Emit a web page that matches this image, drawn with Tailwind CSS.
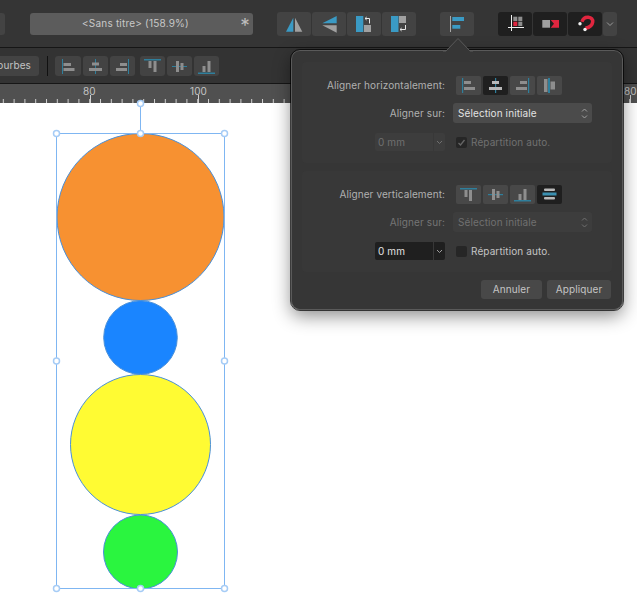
<!DOCTYPE html>
<html lang="fr">
<head>
    <meta charset="UTF-8">
    <title>Affinity - Aligner</title>
    <script src="https://cdn.jsdelivr.net/npm/@tailwindcss/browser@4"></script>
</head>
<body class="bg-white overflow-hidden font-['Inter',sans-serif] text-[10px] tracking-[0.1px]">
<div class="relative w-[637px] h-[605px] overflow-hidden flex flex-col">

    <!-- Main toolbar -->
    <div class="h-[47px] shrink-0 bg-[#353535] flex items-center">
        <div class="w-[5px] h-[22px] bg-[#434343] rounded-r-[3px]"></div>
        <div class="ml-[25px] w-[223px] h-[22px] bg-[#5c5c5c] rounded-[3px] relative flex items-center justify-center pr-[12px] text-[#c8c8c8] tracking-[0.2px]">
            &lt;Sans titre&gt; (158.9%)
            <span class="absolute right-[3px] top-[1px] text-[19px] leading-[24px] text-[#bdbdbd]">*</span>
        </div>
        <div class="ml-[24px] flex gap-px">
            <button class="w-[34px] h-[24px] bg-[#434343] rounded-[3px]">
                <svg width="34" height="24"><polygon points="9,19.7 16.3,19.7 16.3,5.7" fill="#3a9ac4"/><polygon points="18,5.7 18,19.7 25.3,19.7" fill="#a0a0a0"/></svg>
            </button>
            <button class="w-[34px] h-[24px] bg-[#434343] rounded-[3px]">
                <svg width="34" height="24"><polygon points="10.3,11.3 24.7,4 24.7,11.3" fill="#3a9ac4"/><polygon points="10.3,13.3 24.7,13.3 24.7,20.7" fill="#a0a0a0"/></svg>
            </button>
            <button class="w-[34px] h-[24px] bg-[#434343] rounded-[3px]">
                <svg width="34" height="24"><rect x="9" y="4" width="7.3" height="16" fill="#3a9ac4"/><rect x="17" y="13" width="7" height="7" fill="#a0a0a0"/><path d="M18 6.500h4.500v5M18 6.500l1.700-1.500M18 6.500l1.700 1.500" fill="none" stroke="#e6e6e6"/></svg>
            </button>
            <button class="w-[34px] h-[24px] bg-[#434343] rounded-[3px]">
                <svg width="34" height="24"><rect x="9" y="4" width="7.500" height="16" fill="#3a9ac4"/><rect x="17" y="4" width="7" height="7" fill="#a0a0a0"/><path d="M23.500 13v4.500H18M18 17.500l1.700-1.500M18 17.500l1.700 1.500" fill="none" stroke="#e6e6e6"/></svg>
            </button>
        </div>
        <button class="ml-[24px] w-[34px] h-[24px] bg-[#434343] rounded-[3px]">
            <svg width="34" height="24"><line x1="10.500" y1="4" x2="10.500" y2="20" stroke="#a8a8a8"/><rect x="12.300" y="5" width="11.700" height="4" fill="#3a9ac4"/><rect x="12.300" y="13" width="8" height="3.700" fill="#3a9ac4"/></svg>
        </button>
        <div class="ml-[24px] flex gap-px">
            <button class="w-[34px] h-[24px] bg-[#1f1f1f] rounded-[3px]">
                <svg width="34" height="24"><path d="M13.500 3v16M10 15.500h16" stroke="#f0f0f0" fill="none"/><rect x="15.300" y="4.700" width="4" height="4.300" fill="#8e8e8e"/><rect x="20.300" y="4.700" width="4" height="4.300" fill="#8e8e8e"/><rect x="15.300" y="9.700" width="4" height="4.300" fill="#e0263f"/><rect x="20.300" y="9.700" width="4" height="4.300" fill="#8e8e8e"/></svg>
            </button>
            <button class="w-[34px] h-[24px] bg-[#1f1f1f] rounded-[3px]">
                <svg width="34" height="24"><rect x="9.300" y="8" width="7.700" height="7.700" fill="#a0a0a0"/><polygon points="17.700,8 26,8 26,15.700 17.700,15.700 21,11.800" fill="#e0263f"/></svg>
            </button>
            <button class="w-[34px] h-[24px] bg-[#1f1f1f] rounded-[3px]">
                <svg width="34" height="24"><path d="M14 9.700C15 6.500 17.500 5 20.300 5.200C23.300 5.500 25 7.300 24.700 10C24.300 13 21 15.500 17.500 16.300" fill="none" stroke="#e0263f" stroke-width="3.500"/><circle cx="12" cy="11.700" r="1.700" fill="#f0f0f0"/><circle cx="17" cy="17.500" r="1.700" fill="#f0f0f0"/></svg>
            </button>
            <button class="w-[14px] h-[24px] bg-[#434343] rounded-[3px] flex items-center justify-center">
                <svg width="8" height="6"><path d="M1 1.500l3 3 3-3" fill="none" stroke="#9a9a9a"/></svg>
            </button>
        </div>
    </div>
    <div class="h-px shrink-0 bg-[#161616]"></div>

    <!-- Context toolbar -->
    <div class="h-[35px] shrink-0 bg-[#333333] flex items-center">
        <div class="w-[39px] h-[20px] bg-[#434343] rounded-r-[3px] flex items-center justify-end pr-[8px] text-[#c4c4c4]">ourbes</div>
        <div class="ml-[8px] w-px h-[20px] bg-[#111111]"></div>
        <div class="ml-[7px] flex gap-[2px]">
            <button class="w-[26px] h-[20px] bg-[#434343] rounded-[3px]"><svg width="26" height="20"><rect x="7" y="3" width="1" height="15" fill="#2f7f9c"/><rect x="8.500" y="7" width="7.500" height="3" fill="#8e8e8e"/><rect x="8.500" y="12" width="11" height="3" fill="#8e8e8e"/></svg></button>
            <button class="w-[25px] h-[20px] bg-[#434343] rounded-[3px]"><svg width="25" height="20"><rect x="12" y="3" width="1" height="15" fill="#2f7f9c"/><rect x="9" y="6.500" width="7" height="3" fill="#8e8e8e"/><rect x="6" y="12" width="13" height="3" fill="#8e8e8e"/></svg></button>
            <button class="w-[25px] h-[20px] bg-[#434343] rounded-[3px]"><svg width="25" height="20"><rect x="18" y="3" width="1" height="15" fill="#2f7f9c"/><rect x="10" y="7" width="7" height="3" fill="#8e8e8e"/><rect x="6" y="12" width="11" height="3" fill="#8e8e8e"/></svg></button>
        </div>
        <div class="ml-[5px] flex gap-[2px]">
            <button class="w-[25px] h-[20px] bg-[#434343] rounded-[3px]"><svg width="25" height="20"><rect x="4" y="3" width="17" height="1.500" fill="#2f7f9c"/><rect x="8.500" y="5" width="3" height="7" fill="#8e8e8e"/><rect x="13.500" y="5" width="3" height="11" fill="#8e8e8e"/></svg></button>
            <button class="w-[25px] h-[20px] bg-[#434343] rounded-[3px]"><svg width="25" height="20"><rect x="5" y="10" width="15" height="1" fill="#2f7f9c"/><rect x="9" y="5" width="3" height="11" fill="#8e8e8e"/><rect x="13.500" y="7" width="3" height="7" fill="#8e8e8e"/></svg></button>
            <button class="w-[25px] h-[20px] bg-[#434343] rounded-[3px]"><svg width="25" height="20"><rect x="4" y="16.500" width="17" height="1.500" fill="#2f7f9c"/><rect x="8.500" y="10" width="3" height="6" fill="#8e8e8e"/><rect x="13.500" y="5" width="3" height="11" fill="#8e8e8e"/></svg></button>
        </div>
    </div>
    <div class="h-px shrink-0 bg-[#161616]"></div>

    <!-- Ruler -->
    <div class="h-[19px] shrink-0 bg-[#505050] relative text-[#c4c4c4]">
        <span class="absolute left-[83px] top-[0px]">80</span>
        <span class="absolute left-[190px] top-[0px]">100</span>
        <span class="absolute left-[624px] top-[0px]">80</span>
        <svg width="637" height="19" class="absolute left-0 top-0">
            <defs>
                <pattern id="ticks" x="2.800" y="0" width="10.800" height="19" patternUnits="userSpaceOnUse">
                    <rect x="0" y="15" width="1" height="4" fill="#d0d0d0"/>
                </pattern>
            </defs>
            <rect width="637" height="19" fill="url(#ticks)"/>
            <path d="M90.500 11v8M198.500 11v8M306.500 11v8M630.500 11v8" stroke="#d0d0d0"/>
        </svg>
    </div>

    <!-- Canvas -->
    <div class="flex-1 relative bg-white">
        <svg width="637" height="502" viewBox="0 103 637 502" class="absolute left-0 top-0 overflow-visible">
            <circle cx="140.500" cy="217" r="83.500" fill="#f79131" stroke="#4a90d9"/>
            <circle cx="140.500" cy="337.500" r="36.800" fill="#1a85ff" stroke="#4a90d9"/>
            <circle cx="140.500" cy="444.500" r="70" fill="#fffb33" stroke="#4a90d9"/>
            <circle cx="140.500" cy="552" r="37" fill="#2af53f" stroke="#4a90d9"/>
            <rect x="56.500" y="133.500" width="168" height="455" fill="none" stroke="#7fb6f2"/>
            <line x1="140.500" y1="104" x2="140.500" y2="133" stroke="#7fb6f2"/>
            <g fill="#ffffff" stroke="#a6ccf6" stroke-width="1.500">
                <circle cx="140.500" cy="103.500" r="3"/>
                <circle cx="56.500" cy="133.500" r="3"/>
                <circle cx="140.500" cy="133.500" r="3"/>
                <circle cx="224.500" cy="133.500" r="3"/>
                <circle cx="56.500" cy="361" r="3"/>
                <circle cx="224.500" cy="361" r="3"/>
                <circle cx="56.500" cy="588.500" r="3"/>
                <circle cx="140.500" cy="588.500" r="3"/>
                <circle cx="224.500" cy="588.500" r="3"/>
            </g>
        </svg>
    </div>

    <!-- Align popover -->
    <div class="absolute left-[291px] top-[50px] w-[332px] h-[260px] bg-[#363636] rounded-[9px] border border-[#5a5a5a] outline outline-black/70 shadow-[0_6px_18px_rgba(0,0,0,0.45)] px-[10px] pt-[11px]">
        <svg width="30" height="15" class="absolute left-[151px] top-[-14px]">
            <path d="M0 14H3L15 1.500L27 14H30" fill="#363636" stroke="#5a5a5a"/>
            <rect x="3" y="14" width="24" height="2" fill="#363636"/>
        </svg>

        <!-- Horizontal -->
        <div class="h-[101px] bg-[#383838] rounded-[4px] grid grid-cols-[143px_1fr] gap-x-[8px] items-center content-start pt-[13px] text-[#b0b0b0]">
            <div class="h-[20px] flex items-center justify-end">Aligner horizontalement:</div>
            <div class="flex gap-[2px] pl-[3px]">
                <button class="w-[25px] h-[19px] bg-[#484848] rounded-[2px]"><svg width="25" height="19"><rect x="6" y="2" width="1.200" height="15" fill="#2f7f9c"/><rect x="8" y="5" width="7" height="3" fill="#8e8e8e"/><rect x="8" y="11" width="11" height="3" fill="#8e8e8e"/></svg></button>
                <button class="w-[25px] h-[19px] bg-[#1f1f1f] rounded-[2px]"><svg width="25" height="19"><rect x="12" y="2" width="1.200" height="15" fill="#2f7f9c"/><rect x="9" y="5" width="7" height="3" fill="#b8b8b8"/><rect x="6" y="11" width="13" height="3" fill="#b8b8b8"/></svg></button>
                <button class="w-[25px] h-[19px] bg-[#484848] rounded-[2px]"><svg width="25" height="19"><rect x="18" y="2" width="1.200" height="15" fill="#2f7f9c"/><rect x="10" y="5" width="7" height="3" fill="#8e8e8e"/><rect x="6" y="11" width="11" height="3" fill="#8e8e8e"/></svg></button>
                <button class="w-[25px] h-[19px] bg-[#484848] rounded-[2px]"><svg width="25" height="19"><rect x="7" y="3" width="3.500" height="13" fill="#8e8e8e"/><rect x="11" y="2" width="2" height="15" fill="#2f7f9c"/><rect x="13.500" y="5.500" width="4.500" height="8" fill="#8e8e8e"/></svg></button>
            </div>
            <div class="h-[20px] mt-[8px] flex items-center justify-end">Aligner sur:</div>
            <div class="mt-[8px] w-[139px] h-[20px] bg-[#4b4b4b] rounded-[3px] flex items-center justify-between pl-[5px] pr-[4px] text-[#e2e2e2]">
                Sélection initiale
                <svg width="7" height="13" fill="none" stroke="#a0a0a0"><path d="M1 4.500l2.500-2.500L6 4.500M1 8.500l2.500 2.500L6 8.500"/></svg>
            </div>
            <div class="h-[18px] mt-[10px] flex justify-end gap-px text-[#707070]">
                <div class="w-[58px] bg-[#3d3d3d] rounded-l-[2px] flex items-center pl-[3px]">0 mm</div>
                <div class="w-[11px] bg-[#3d3d3d] rounded-r-[2px] flex items-center justify-center"><svg width="7" height="5"><path d="M1 1l2.500 2.500L6 1" fill="none" stroke="#707070"/></svg></div>
            </div>
            <div class="mt-[10px] flex items-center gap-[4px] text-[#707070]">
                <div class="w-[11px] h-[11px] ml-[3px] rounded-[2px] bg-[#262626] flex items-center justify-center"><svg width="9" height="9"><path d="M1.500 5l2 2 4-5" fill="none" stroke="#666666" stroke-width="1.300"/></svg></div>
                Répartition auto.
            </div>
        </div>

        <!-- Vertical -->
        <div class="mt-[8px] h-[101px] bg-[#383838] rounded-[4px] grid grid-cols-[143px_1fr] gap-x-[8px] items-center content-start pt-[13px] text-[#b0b0b0]">
            <div class="h-[20px] flex items-center justify-end">Aligner verticalement:</div>
            <div class="flex gap-[2px] pl-[3px]">
                <button class="w-[25px] h-[19px] bg-[#484848] rounded-[2px]"><svg width="25" height="19"><rect x="4" y="3" width="17" height="1.500" fill="#2f7f9c"/><rect x="8.500" y="5" width="3" height="7" fill="#8e8e8e"/><rect x="13" y="5" width="3" height="11" fill="#8e8e8e"/></svg></button>
                <button class="w-[25px] h-[19px] bg-[#484848] rounded-[2px]"><svg width="25" height="19"><rect x="5" y="9" width="15" height="1.200" fill="#2f7f9c"/><rect x="9" y="4" width="3" height="11" fill="#8e8e8e"/><rect x="13.500" y="6" width="3" height="7" fill="#8e8e8e"/></svg></button>
                <button class="w-[25px] h-[19px] bg-[#484848] rounded-[2px]"><svg width="25" height="19"><rect x="4" y="15" width="17" height="1.500" fill="#2f7f9c"/><rect x="8.500" y="9" width="3" height="6" fill="#8e8e8e"/><rect x="13.500" y="4" width="3" height="11" fill="#8e8e8e"/></svg></button>
                <button class="w-[25px] h-[19px] bg-[#1f1f1f] rounded-[2px]"><svg width="25" height="19"><rect x="7" y="3.500" width="11" height="2.500" rx="1" fill="#b8b8b8"/><rect x="5.500" y="7.500" width="14" height="3" fill="#3a8fb0"/><rect x="7" y="12" width="11" height="2.500" rx="1" fill="#b8b8b8"/></svg></button>
            </div>
            <div class="h-[20px] mt-[8px] flex items-center justify-end text-[#757575]">Aligner sur:</div>
            <div class="mt-[8px] w-[139px] h-[20px] bg-[#3d3d3d] rounded-[3px] flex items-center justify-between pl-[5px] pr-[4px] text-[#707070]">
                Sélection initiale
                <svg width="7" height="13" fill="none" stroke="#707070"><path d="M1 4.500l2.500-2.500L6 4.500M1 8.500l2.500 2.500L6 8.500"/></svg>
            </div>
            <div class="h-[18px] mt-[10px] flex justify-end gap-px text-[#e2e2e2]">
                <div class="w-[58px] bg-[#1f1f1f] rounded-l-[2px] flex items-center pl-[3px]">0 mm</div>
                <div class="w-[11px] bg-[#1f1f1f] rounded-r-[2px] flex items-center justify-center"><svg width="7" height="5"><path d="M1 1l2.500 2.500L6 1" fill="none" stroke="#a0a0a0"/></svg></div>
            </div>
            <div class="mt-[10px] flex items-center gap-[4px] text-[#c4c4c4]">
                <div class="w-[11px] h-[11px] ml-[3px] rounded-[2px] bg-[#262626]"></div>
                Répartition auto.
            </div>
        </div>

        <div class="mt-[8px] flex justify-end gap-[5px] pr-[1px] text-[#c4c4c4]">
            <button class="w-[61px] h-[19px] bg-[#484848] rounded-[3px]">Annuler</button>
            <button class="w-[64px] h-[19px] bg-[#484848] rounded-[3px]">Appliquer</button>
        </div>
    </div>
</div>
</body>
</html>
